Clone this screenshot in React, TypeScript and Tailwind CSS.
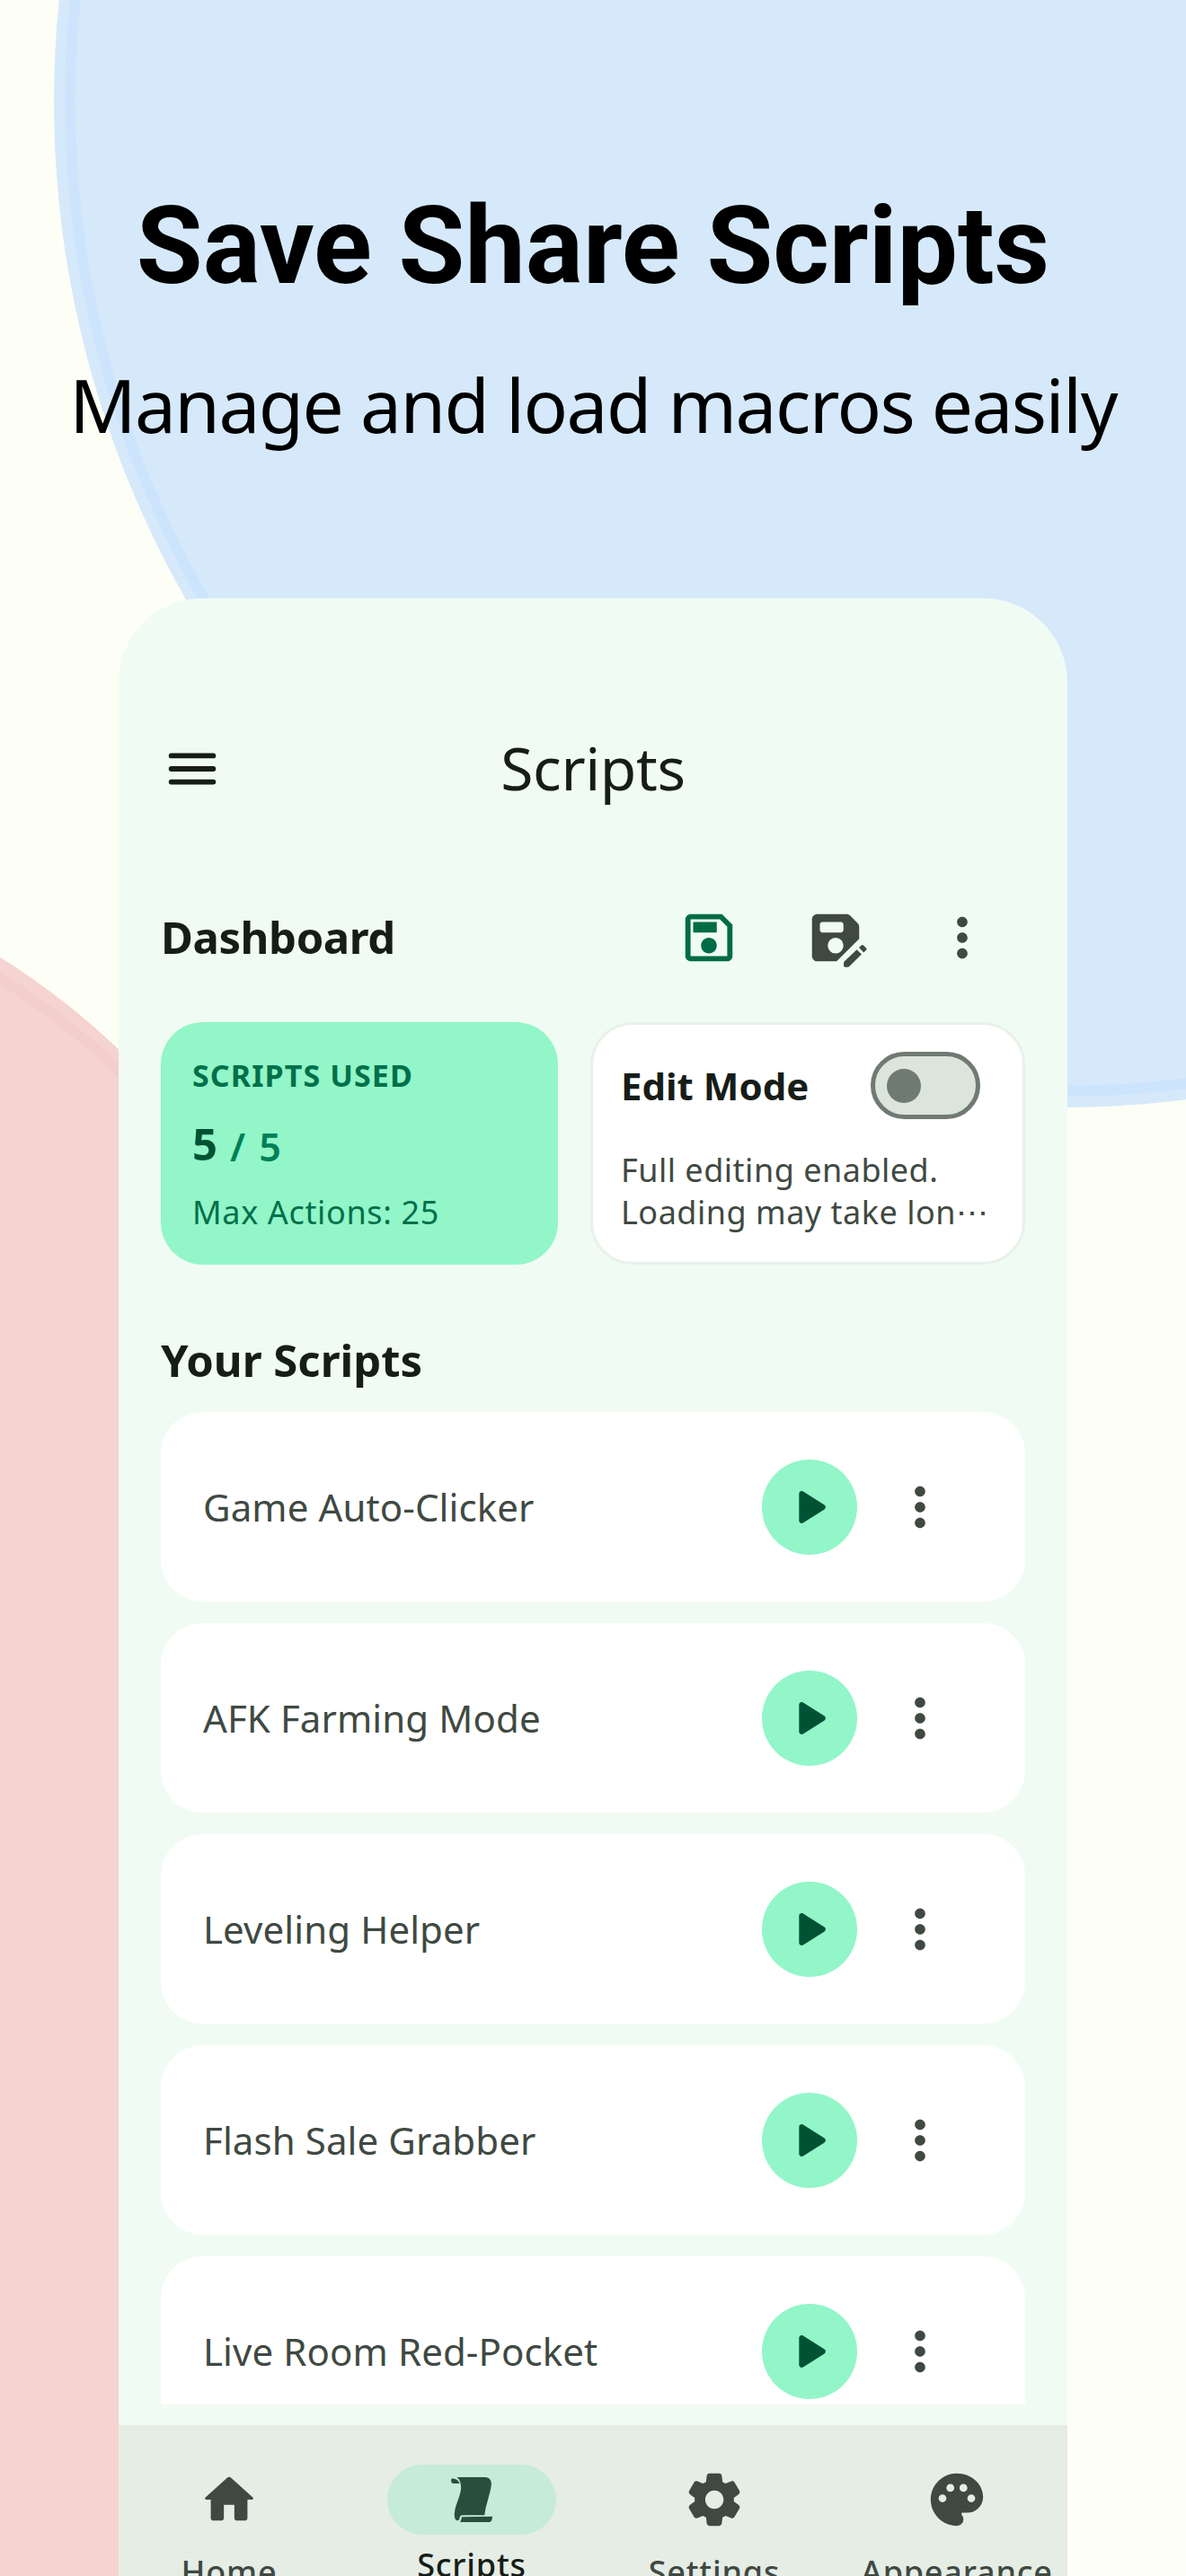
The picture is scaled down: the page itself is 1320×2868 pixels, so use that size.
import { MdOutlineSave, MdMoreVert, MdPalette } from "react-icons/md";

const scripts = [
    "Game Auto-Clicker",
    "AFK Farming Mode",
    "Leveling Helper",
    "Flash Sale Grabber",
    "Live Room Red-Pocket",
];

export default function App() {
    return (
        <div className="relative w-[1320px] h-[2868px] overflow-hidden bg-[#fdfef5] font-['Noto_Sans',sans-serif]">
            <Backdrop />
            <div className="relative flex flex-col items-center h-full">
                <header className="flex flex-col items-center h-[666px] text-black whitespace-nowrap">
                    <h1 className="mt-[203px] font-['Roboto',sans-serif] font-bold text-[120px] leading-[142px]">
                        Save Share Scripts
                    </h1>
                    <p className="mt-[50px] text-[82px] leading-[110px] tracking-[-1.6px]">Manage and load macros easily</p>
                </header>

                <main className="flex flex-col flex-1 min-h-0 w-[1056px] rounded-t-[94px] overflow-hidden bg-[#f0fcf3]">
                    <TopBar />
                    <div className="flex flex-col flex-1 min-h-0 px-[47px] overflow-hidden">
                        <Dashboard />
                        <h2 className="mt-[76px] text-[49px] leading-[60px] font-bold text-[#161d18]">Your Scripts</h2>
                        <div className="mt-[28px] flex flex-col flex-1 min-h-0 gap-[24px] overflow-hidden">
                            {scripts.map((name) => (
                                <ScriptRow key={name} name={name} />
                            ))}
                        </div>
                    </div>
                    <BottomNav />
                </main>
            </div>
        </div>
    );
}

function Backdrop() {
    return (
        <svg className="absolute inset-0" width="1320" height="2868" viewBox="0 0 1320 2868">
            <circle cx="1180" cy="113" r="1120" fill="#d6e9fb" />
            <circle cx="1180" cy="113" r="1102" fill="none" stroke="#cde4fd" strokeWidth="12" />
            <path d="M0 1065.7A830 830 0 0 1 132 1168.3L200 1240V2868H0z" fill="#f5d3d1" />
            <path d="M-20 1077L0 1089.2A830 830 0 0 1 132 1191.5L152 1211" fill="none" stroke="#f3cecd" strokeWidth="12" />
        </svg>
    );
}

function TopBar() {
    return (
        <div className="mt-[120px] h-[140px] shrink-0 grid grid-cols-3 items-center px-[47px] text-[#161d18]">
            <MenuIcon />
            <h2 className="mt-[-4px] text-center text-[66px] tracking-[-0.4px]">Scripts</h2>
        </div>
    );
}

function Dashboard() {
    return (
        <section className="mt-[82px] shrink-0">
            <div className="flex items-center gap-[71px] h-[72px] pr-[35px] text-[#3f4942]">
                <h2 className="mr-auto text-[49px] font-bold tracking-[-0.4px] text-[#161d18]">Dashboard</h2>
                <MdOutlineSave size={70} className="text-[#006c47]" />
                <SaveAsIcon />
                <MdMoreVert size={70} />
            </div>
            <div className="mt-[58px] flex gap-[36px] h-[270px]">
                <div className="w-[442px] rounded-[47px] bg-[#92f6c8] px-[35px] text-[#00704a] whitespace-nowrap">
                    <p className="mt-[35px] text-[34px] leading-[48px] font-bold tracking-[1.1px]">SCRIPTS USED</p>
                    <p className="mt-[22px] flex text-[49px] leading-[60px] font-bold text-[#005235]">
                        5<span className="ml-[14px] mt-[4px] text-[43px] font-semibold tracking-[2px] text-[#008058]">/ 5</span>
                    </p>
                    <p className="mt-[19px] text-[36px] leading-[48px] tracking-[0.65px]">Max Actions: 25</p>
                </div>
                <div className="flex-1 rounded-[47px] border-[3px] border-[#e8f2ea] bg-white pl-[31px] whitespace-nowrap">
                    <div className="mt-[30px] flex items-center justify-between h-[75px] pr-[47px]">
                        <h3 className="text-[42px] font-bold text-[#161d18]">Edit Mode</h3>
                        <div className="flex items-center w-[122px] h-[75px] rounded-full border-[5px] border-[#6f7a72] bg-[#dce5dc] pl-[13px]">
                            <div className="size-[38px] rounded-full bg-[#6f7a72]" />
                        </div>
                    </div>
                    <p className="mt-[33px] text-[36px] leading-[47px] tracking-[0.5px] text-[#3f4942]">
                        Full editing enabled.
                        <br />
                        Loading may take lon⋯
                    </p>
                </div>
            </div>
        </section>
    );
}

function ScriptRow({ name }: { name: string }) {
    return (
        <div className="flex items-center h-[211px] shrink-0 rounded-[47px] bg-white pl-[47px] text-[#3f4942]">
            <span className="mr-auto text-[42px] tracking-[0.1px]">{name}</span>
            <span className="flex items-center justify-center size-[106px] rounded-full bg-[#92f6c8]">
                <PlayIcon />
            </span>
            <MdMoreVert size={70} className="ml-[35px] mr-[82px]" />
        </div>
    );
}

function BottomNav() {
    return (
        <nav className="mt-[23px] h-[168px] shrink-0 grid grid-cols-[246px_294px_246px_294px] overflow-hidden bg-[#e5ede5] text-[#3f4942]">
            <NavItem label="Home" icon={<HomeIcon />} />
            <NavItem label="Scripts" icon={<ScrollIcon />} active />
            <NavItem label="Settings" icon={<GearIcon />} />
            <NavItem label="Appearance" icon={<MdPalette size={70} />} />
        </nav>
    );
}

function NavItem({ label, icon, active }: { label: string; icon: React.ReactNode; active?: boolean }) {
    return (
        <div className="flex flex-col items-center pt-[44px]">
            <div className={active ? "flex items-center justify-center w-[188px] h-[78px] rounded-full bg-[#c6ebd7] text-[#2a4e3d]" : "flex items-center justify-center h-[78px]"}>
                {icon}
            </div>
            <span className={active ? "mt-[7px] text-[36px] leading-[54px] font-medium tracking-[0.8px] text-[#161d18]" : "mt-[15px] text-[36px] leading-[54px] font-medium tracking-[0.8px]"}>
                {label}
            </span>
        </div>
    );
}

function MenuIcon() {
    return (
        <svg width="70" height="70" viewBox="0 0 24 24" stroke="currentColor" strokeWidth="2" strokeLinecap="round">
            <path d="M4 7h16M4 12h16M4 17h16" />
        </svg>
    );
}

function SaveAsIcon() {
    return (
        <svg width="70" height="70" viewBox="0 0 24 24" fill="currentColor" className="overflow-visible">
            <path
                fillRule="evenodd"
                d="M5 3h11.2c.5 0 1 .2 1.4.6l2.8 2.8c.4.4.6.9.6 1.4v4.6L12.4 21H5c-1.1 0-2-.9-2-2V5c0-1.1.9-2 2-2zm2 3c-.55 0-1 .45-1 1v2c0 .55.45 1 1 1h7c.55 0 1-.45 1-1V7c0-.55-.45-1-1-1H7zm5 6a3 3 0 1 0 0 6 3 3 0 0 0 0-6z"
            />
            <path d="M20.1 16.5l1.8 1.8-4.6 4.6c-.2.2-.4.3-.7.3h-1c-.3 0-.5-.2-.5-.5v-1c0-.3.1-.5.3-.7z" />
            <path d="M20.9 15.8l.9-.9c.25-.25.6-.25.85 0l1 1c.25.25.25.6 0 .85l-.9.9z" />
        </svg>
    );
}

function PlayIcon() {
    return (
        <svg width="70" height="70" viewBox="0 0 24 24" fill="#005235">
            <path d="M8 6.82v10.36c0 .79.87 1.27 1.54.84l8.14-5.18c.62-.39.62-1.29 0-1.69L9.54 5.98C8.87 5.55 8 6.03 8 6.82z" />
        </svg>
    );
}

function HomeIcon() {
    return (
        <svg width="70" height="70" viewBox="0 0 24 24" fill="currentColor">
            <path d="M10 19v-5h4v5c0 .55.45 1 1 1h3c.55 0 1-.45 1-1v-7h1.7c.46 0 .68-.57.33-.87L12.67 3.6c-.38-.34-.96-.34-1.34 0l-8.36 7.53c-.34.3-.13.87.33.87H5v7c0 .55.45 1 1 1h3c.55 0 1-.45 1-1z" />
        </svg>
    );
}

function ScrollIcon() {
    return (
        <svg width="46" height="50" viewBox="0 0 46 50" fill="currentColor">
            <path d="M6.5 0H38c4.5 0 7.4 3.5 6.8 8.5-.6 6-2.3 10.500-3.600 16-1.500 6-3.400 11.500-3.800 17.700H13c-2.400 0-3 1.200-3.400 3-.4 1.700-1 3.100-2.200 3.100C5 48.300 3.800 45.500 3.800 42c0-7.500 3-13 5.200-20.200C10.500 17 11.400 13.500 11 9.500 10.700 5.500 9.200 2 6.500 0z" />
            <path d="M1 1.500c3.700-.3 7 1.500 8.500 5.500H2C.3 7-.8 2.500 1 1.500z" />
            <path d="M12 44.200l34-.5c0 3.500-1.400 6.300-3.500 6.300H9.800c1.400-1.300 1.800-3.500 2.200-5.800z" />
        </svg>
    );
}

function GearIcon() {
    return (
        <svg width="70" height="70" viewBox="0 0 24 24" fill="currentColor">
            <path d="M19.5 12c0-.23-.01-.45-.03-.68l1.86-1.41c.4-.3.51-.86.26-1.3l-1.87-3.23c-.25-.44-.79-.62-1.25-.42l-2.15.91c-.37-.26-.76-.49-1.17-.68l-.29-2.31C14.8 2.38 14.37 2 13.87 2h-3.73c-.51 0-.94.38-1 .88l-.29 2.31c-.41.19-.8.42-1.17.68l-2.15-.91c-.46-.2-1-.02-1.25.42L2.41 8.62c-.25.44-.14.99.26 1.3l1.86 1.41C4.51 11.55 4.5 11.77 4.5 12s.01.45.03.68l-1.86 1.41c-.4.3-.51.86-.26 1.3l1.87 3.23c.25.44.79.62 1.25.42l2.15-.91c.37.26.76.49 1.17.68l.29 2.31c.06.5.49.88.99.88h3.73c.5 0 .93-.38.99-.88l.29-2.31c.41-.19.8-.42 1.17-.68l2.15.91c.46.2 1 .02 1.25-.42l1.87-3.23c.25-.44.14-.99-.26-1.3l-1.86-1.41c.02-.23.03-.45.03-.68zm-7.46 3.5c-1.93 0-3.5-1.57-3.5-3.5s1.57-3.5 3.5-3.5 3.5 1.57 3.5 3.5-1.57 3.500-3.500 3.500z" />
        </svg>
    );
}
